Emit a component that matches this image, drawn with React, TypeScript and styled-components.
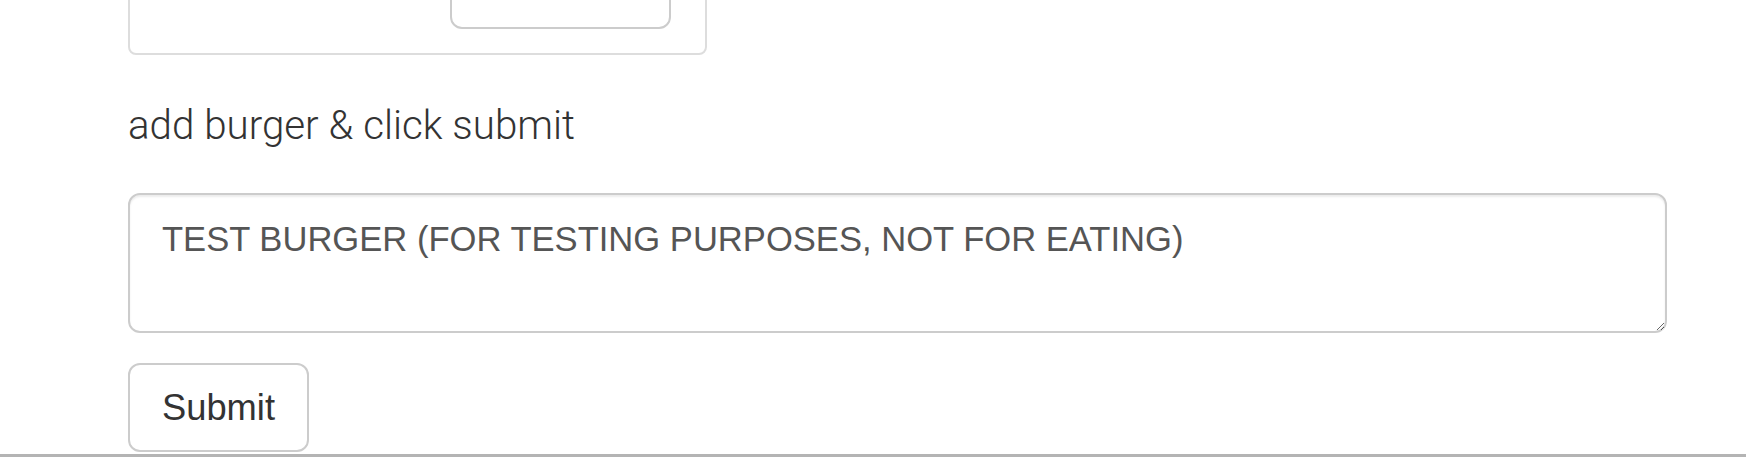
import React from 'react';
import styled, { createGlobalStyle } from 'styled-components';

const GlobalStyle = createGlobalStyle`
  html, body {
    margin: 0;
    padding: 0;
    background: #fff;
    overflow: hidden;
  }
  body {
    font-family: "Liberation Sans", Arial, sans-serif;
    color: #333;
  }
`;

const Page = styled.div`
  display: flex;
  flex-direction: column;
  align-items: flex-start;
  padding: 0 79px 0 128px;
  height: 458px;
  box-sizing: border-box;
`;

const BurgerCard = styled.div`
  box-sizing: border-box;
  width: 579px;
  margin-top: -87px;
  padding: 24px 34px 24px 0;
  border: 2px solid #ddd;
  border-radius: 8px;
  display: flex;
  justify-content: flex-end;
`;

const Button = styled.button<{ wide?: boolean }>`
  box-sizing: border-box;
  height: ${props => (props.wide ? '90px' : '89px')};
  width: ${props => (props.wide ? '221px' : 'auto')};
  padding: 0 ${props => (props.wide ? '12px' : '32px')};
  background: #fff;
  border: 2px solid #ccc;
  border-radius: 12px;
  color: #333;
  font-family: "Liberation Sans", Arial, sans-serif;
  font-size: ${props => (props.wide ? '22px' : '36.3px')};
  font-weight: normal;
  white-space: nowrap;
  cursor: pointer;
`;

const Heading = styled.h2`
  margin: 47px 0 0 0;
  font-family: Roboto, "Liberation Sans", sans-serif;
  font-weight: 300;
  font-size: 40.3px;
  line-height: 48px;
  color: #333;
`;

const BurgerInput = styled.textarea`
  box-sizing: border-box;
  width: 100%;
  height: 140px;
  margin: 43px 0 0 0;
  padding: 20px 32px;
  border: 2px solid #ccc;
  border-radius: 12px;
  box-shadow: inset 0 2px 2px rgba(0, 0, 0, 0.075);
  font-family: "Liberation Sans", Arial, sans-serif;
  font-size: 34.6px;
  line-height: 48px;
  color: #555;
  background: #fff;
  outline: none;
`;

const SubmitRow = styled.div`
  margin-top: 30px;
`;

const BottomRule = styled.div`
  align-self: stretch;
  margin: 2px -79px 0 -128px;
  height: 3px;
  background: #b4b4b4;
`;

const App: React.FC = () => {
  return (
    <>
      <GlobalStyle />
      <Page>
        <BurgerCard>
          <Button wide type="button">Devour it!</Button>
        </BurgerCard>
        <Heading>add burger &amp; click submit</Heading>
        <BurgerInput defaultValue="TEST BURGER (FOR TESTING PURPOSES, NOT FOR EATING)" />
        <SubmitRow>
          <Button type="submit">Submit</Button>
        </SubmitRow>
        <BottomRule />
      </Page>
    </>
  );
};

export default App;
